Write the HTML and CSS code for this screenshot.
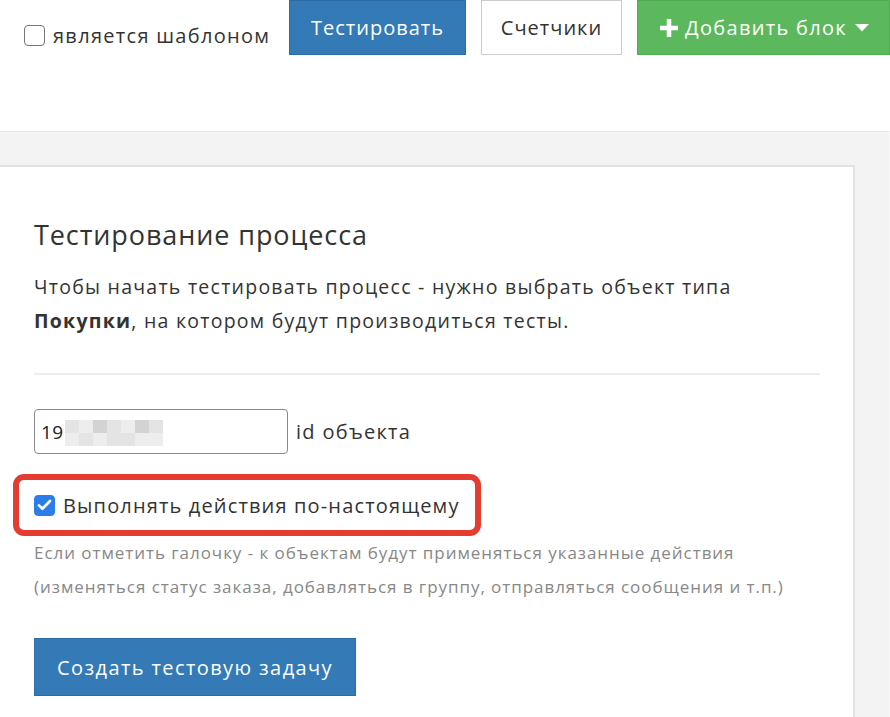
FILE: index.html
```html
<!DOCTYPE html>
<html lang="ru">
<head>
<meta charset="utf-8">
<title>Тестирование процесса</title>
<link rel="stylesheet" href="styles.css">
</head>
<body>
<div class="toolbar">
  <label class="tpl">
    <span class="cb"></span>
    <span>является шаблоном</span>
  </label>
  <button class="btn btn-primary">Тестировать</button>
  <button class="btn btn-default">Счетчики</button>
  <button class="btn btn-success">
    <svg class="plus" viewBox="0 0 20 20" width="18" height="18"><path d="M7.5 0h5v7.5H20v5h-7.5V20h-5v-7.5H0v-5h7.5z" fill="#fff"/></svg>
    <span>Добавить блок</span>
    <svg class="caret" viewBox="0 0 14 8" width="14" height="8"><path d="M0 0h14L7 7.5z" fill="#fff"/></svg>
  </button>
</div>

<div class="workspace">
  <div class="card">
    <h2 class="title">Тестирование процесса</h2>
    <p class="lead">Чтобы начать тестировать процесс - нужно выбрать объект типа<br><b>Покупки</b>, на котором будут производиться тесты.</p>
    <hr class="sep">
    <div class="idrow">
      <div class="input">
        <span class="val">19</span>
        <span class="mosaic">
          <i class="m2"></i><i class="m3"></i><i class="m1"></i><i class="m2"></i><i class="m3"></i><i class="m1"></i><i class="m2"></i>
          <i class="m3"></i><i class="m2"></i><i class="m3"></i><i class="m2"></i><i class="m2"></i><i class="m3"></i><i class="m3"></i>
        </span>
      </div>
      <span class="idlabel">id объекта</span>
    </div>
    <div class="highlight">
      <label class="real">
        <span class="cb checked"><svg viewBox="0 0 20 20" width="20" height="20"><path d="M4.2 10.4l3.6 3.6 8-8.2" fill="none" stroke="#fff" stroke-width="2.8" stroke-linecap="round" stroke-linejoin="round"/></svg></span>
        <span>Выполнять действия по-настоящему</span>
      </label>
    </div>
    <p class="help">Если отметить галочку - к объектам будут применяться указанные действия<br>(изменяться статус заказа, добавляться в группу, отправляться сообщения и т.п.)</p>
    <button class="btn btn-primary btn-create">Создать тестовую задачу</button>
  </div>
</div>
</body>
</html>
```

FILE: styles.css
```css
html, body {
  margin: 0;
  padding: 0;
  background: #fff;
  font-family: "Open Sans", "Lato", sans-serif;
  color: #333;
  overflow: hidden;
}

.toolbar {
  display: flex;
  align-items: flex-start;
  height: 55px;
  padding-left: 24px;
}

.tpl {
  display: flex;
  align-items: center;
  gap: 8px;
  font-size: 20px;
  letter-spacing: 1.3px;
  color: #333;
  margin-top: 22px;
  width: 265px;
  flex: none;
  white-space: nowrap;
}

.cb {
  display: inline-flex;
  align-items: center;
  justify-content: center;
  box-sizing: border-box;
  width: 21px;
  height: 21px;
  border: 1.5px solid #767676;
  border-radius: 4px;
  background: #fff;
  flex: none;
}

.cb.checked {
  background: #2b7de9;
  border-color: #2b7de9;
}

.btn {
  font-family: inherit;
  font-size: 20px;
  letter-spacing: 1px;
  border: 1px solid transparent;
  border-radius: 0;
  height: 55px;
  padding: 0 20px;
  cursor: pointer;
  display: inline-flex;
  align-items: center;
  box-sizing: border-box;
  white-space: nowrap;
  flex: none;
}

.btn-primary {
  background: #337ab7;
  border-color: #2e6da4;
  color: #fff;
  width: 177px;
  justify-content: center;
}

.btn-default {
  background: #fff;
  border-color: #ccc;
  color: #333;
  margin-left: 15px;
  width: 141px;
  justify-content: center;
}

.btn-success {
  background: #5cb85c;
  border-color: #4cae4c;
  color: #fff;
  margin-left: 15px;
  width: 253px;
  padding: 0 0 0 22px;
  gap: 7px;
  letter-spacing: 1.3px;
}

.btn-success .caret {
  margin-left: 1px;
}

.workspace {
  margin-top: 76px;
  border-top: 1px solid #e6e6e6;
  background: #f3f3f3;
  padding: 33px 0 0 0;
  height: 586px;
  box-sizing: border-box;
  border-right: 1px solid #fafafa;
}

.card {
  width: 855px;
  box-sizing: border-box;
  background: #fff;
  border: 2px solid #e2e2e2;
  border-left: none;
  border-bottom: none;
  padding: 51px 33px 0 34px;
  height: 553px;
}

.title {
  margin: 0;
  font-weight: 400;
  font-size: 27px;
  letter-spacing: 0.9px;
  line-height: 34px;
  color: #333;
}

.lead {
  margin: 18px 0 0;
  font-size: 19.5px;
  line-height: 34px;
  color: #333;
  letter-spacing: 1.25px;
  white-space: nowrap;
}

.lead b {
  font-weight: 700;
}

.sep {
  margin: 35px 0 0;
  border: 0;
  border-top: 2px solid #eee;
  height: 0;
}

.idrow {
  display: flex;
  align-items: center;
  gap: 8px;
  margin-top: 34px;
}

.input {
  box-sizing: border-box;
  width: 254px;
  height: 45px;
  border: 1px solid #8a8a8a;
  border-radius: 4px;
  display: flex;
  align-items: center;
  padding-left: 6px;
  font-size: 19px;
  letter-spacing: 0.5px;
  color: #222;
}

.mosaic {
  display: grid;
  grid-template-columns: repeat(7, 14px);
  grid-template-rows: repeat(2, 13px);
  margin-left: 1px;
  margin-top: 3px;
}

.mosaic i { display: block; }
.mosaic .m1 { background: #d3d3d3; }
.mosaic .m2 { background: #e4e4e4; }
.mosaic .m3 { background: #ededed; }

.idlabel {
  font-size: 20px;
  letter-spacing: 1.3px;
  color: #333;
}

.highlight {
  margin: 20px 0 0 -21px;
  width: 468px;
  height: 62px;
  box-sizing: border-box;
  border: 6px solid #e53c32;
  border-radius: 11px;
  display: flex;
  align-items: center;
  padding-left: 15px;
}

.real {
  display: flex;
  align-items: center;
  gap: 8px;
  font-size: 20px;
  letter-spacing: 1.15px;
  color: #333;
  white-space: nowrap;
}

.help {
  margin: 0;
  font-size: 17px;
  line-height: 34px;
  letter-spacing: 0.95px;
  color: #888;
  white-space: nowrap;
}

.btn-create {
  margin-top: 34px;
  width: 322px;
  height: 58px;
  justify-content: center;
  font-size: 20px;
  letter-spacing: 1.4px;
}
```
